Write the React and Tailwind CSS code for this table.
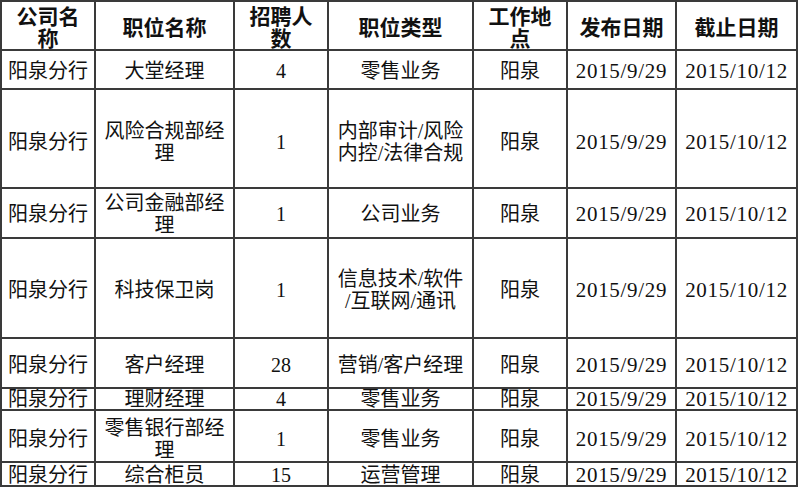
import React from 'react';

const head = [
    ['公司名', '称'],
    ['职位名称'],
    ['招聘人', '数'],
    ['职位类型'],
    ['工作地', '点'],
    ['发布日期'],
    ['截止日期'],
];

// row heights come from the sheet, some rows are too short for their text
const rows = [
    { h: 'h-[39px] pt-[2px]', cells: [['阳泉分行'], ['大堂经理'], ['4'], ['零售业务'], ['阳泉']] },
    { h: 'h-[99px] pt-[6px]', cells: [['阳泉分行'], ['风险合规部经', '理'], ['1'], ['内部审计/风险', '内控/法律合规'], ['阳泉']] },
    { h: 'h-[50px] pt-[2px]', cells: [['阳泉分行'], ['公司金融部经', '理'], ['1'], ['公司业务'], ['阳泉']] },
    { h: 'h-[100px] pt-[4px]', cells: [['阳泉分行'], ['科技保卫岗'], ['1'], ['信息技术/软件', '/互联网/通讯'], ['阳泉']] },
    { h: 'h-[50px] pt-[3px]', cells: [['阳泉分行'], ['客户经理'], ['28'], ['营销/客户经理'], ['阳泉']] },
    { h: 'h-[22px]', cells: [['阳泉分行'], ['理财经理'], ['4'], ['零售业务'], ['阳泉']] },
    { h: 'h-[52px] pt-[6px]', cells: [['阳泉分行'], ['零售银行部经', '理'], ['1'], ['零售业务'], ['阳泉']] },
    { h: 'h-[24px] pt-[2px]', cells: [['阳泉分行'], ['综合柜员'], ['15'], ['运营管理'], ['阳泉']] },
];

const Cell = ({ lines, className = '' }) => (
    <div className={`flex flex-col items-center justify-center border-r-2 border-b-2 border-[#3a3a3a] whitespace-nowrap ${className}`}>
        {lines.map((l, i) => (
            <span key={i}>{l}</span>
        ))}
    </div>
);

const App = () => {
    return (
        <div className="w-[800px] h-[490px] bg-white text-[#111] font-['Liberation_Serif','Noto_Sans_CJK_SC',serif]">
            <div className="grid grid-cols-[94px_139px_94px_145px_94px_109px_121px] w-[798px] border-t-2 border-l-2 border-[#3a3a3a]">
                {head.map((lines, i) => (
                    <Cell key={i} lines={lines} className="h-[49px] text-[21px] leading-[22px] font-bold font-['Noto_Sans_CJK_SC',sans-serif]" />
                ))}
                {rows.map((r, ri) => (
                    <React.Fragment key={ri}>
                        {r.cells.map((lines, ci) => (
                            <Cell key={ci} lines={lines} className={`${r.h} overflow-hidden leading-[22px] text-[20px]`} />
                        ))}
                        <Cell lines={['2015/9/29']} className={`${r.h} overflow-hidden leading-[22px] text-[21px] tracking-[0.7px]`} />
                        <Cell lines={['2015/10/12']} className={`${r.h} overflow-hidden leading-[22px] text-[21px] tracking-[0.7px]`} />
                    </React.Fragment>
                ))}
            </div>
        </div>
    );
};

export default App;
